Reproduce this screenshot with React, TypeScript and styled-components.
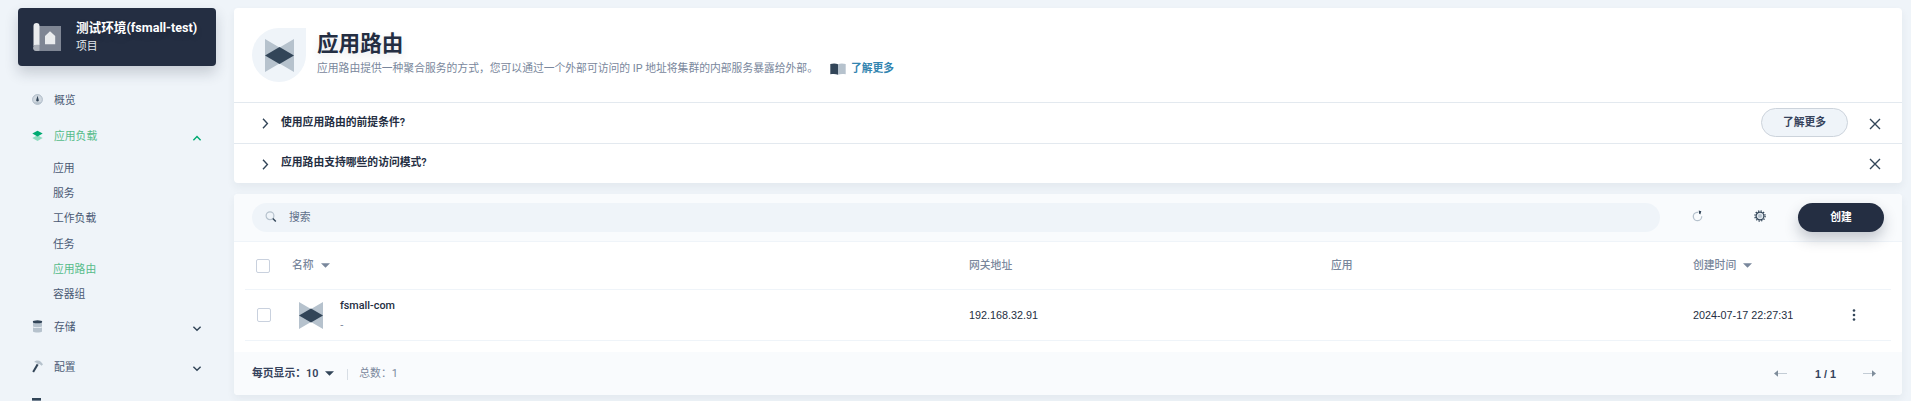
import React from 'react';
import styled, { createGlobalStyle } from 'styled-components';

const ink = '#242e42';
const slate = '#324558';
const pale = '#b6c2cd';
const muted = '#79879c';

const GlobalStyle = createGlobalStyle`
  * { box-sizing: border-box; }
  html, body { margin: 0; height: 401px; overflow: hidden; background: #eff4f9; }
  body {
    font-family: Roboto, "Noto Sans CJK SC", sans-serif;
    font-size: 10.8px;
    line-height: 18px;
    color: ${ink};
    white-space: nowrap;
  }
  svg { display: block; flex: none; }
`;

const Page = styled.div`
  display: flex;
  width: 1911px;
  height: 401px;
  padding: 8px 9px 0 18px;
  overflow: hidden;
`;

const Sidebar = styled.aside`
  width: 198px;
  margin-right: 18px;
  flex: none;
`;

const ProjectCard = styled.div`
  display: flex;
  align-items: center;
  height: 58px;
  padding-left: 15px;
  border-radius: 4px;
  background: ${ink};
  color: #fff;
  box-shadow: 0 7px 14px rgba(36, 46, 66, 0.2);
`;

const ProjectText = styled.div`
  margin-left: 15px;
  strong { display: block; font-size: 12.6px; font-weight: 700; line-height: 18px; text-shadow: 0 4px 8px rgba(36, 46, 66, 0.1); }
  span { display: block; padding-top: 1px; line-height: 18px; color: #e3e9ef; }
`;

const Nav = styled.nav`
  padding: 16px 14px 0;
`;

const NavItem = styled.div<{ $active?: boolean; $height: number }>`
  display: flex;
  align-items: center;
  height: ${p => p.$height}px;
  color: ${p => (p.$active ? '#55bc8a' : '#4a5974')};
`;

const NavLabel = styled.span`
  flex: 1;
  margin-left: 11px;
  padding-top: 1px;
`;

const NavArrow = styled.div`
  padding-top: 4px;
`;

const SubList = styled.div`
  padding: 2px 0 0 21px;
`;

const SubItem = styled.div<{ $active?: boolean }>`
  height: 25.2px;
  line-height: 25.2px;
  color: ${p => (p.$active ? '#55bc8a' : '#4a5974')};
`;

const Main = styled.main`
  width: 1668px;
  flex: none;
`;

const Card = styled.section`
  overflow: hidden;
  border-radius: 4px;
  background: #fff;
  box-shadow: 0 4px 8px rgba(36, 46, 66, 0.06);
`;

const Intro = styled.header`
  display: flex;
  height: 94px;
  padding: 20px 18px 0;
`;

const IconDrop = styled.div`
  display: flex;
  align-items: center;
  justify-content: center;
  width: 54px;
  height: 54px;
  margin-right: 11px;
  border-radius: 50% 0 50% 50%;
  background: #eff4f9;
`;

const Title = styled.h1`
  margin: 0;
  padding-top: 1px;
  font-size: 21.6px;
  line-height: 29px;
  font-weight: 700;
  text-shadow: 0 4px 8px rgba(36, 46, 66, 0.1);
`;

const Description = styled.p`
  display: flex;
  align-items: center;
  margin: 2px 0 0;
  color: ${muted};
`;

const LearnMore = styled.a`
  display: flex;
  align-items: center;
  gap: 5px;
  margin-left: 12px;
  color: #3385b0;
  font-weight: 700;
`;

const Tip = styled.div<{ $height: number }>`
  display: flex;
  align-items: center;
  height: ${p => p.$height}px;
  padding: 1px 21px 0 27px;
  border-top: 1px solid #e3e9ef;
`;

const TipTitle = styled.strong`
  flex: 1;
  margin: 0 0 2px 10px;
  font-weight: 600;
`;

const TipButton = styled.button`
  width: 87px;
  height: 29px;
  margin: 0 21px 2px 0;
  padding: 0;
  border: 1px solid #ccd3db;
  border-radius: 15px;
  background: #eff4f9;
  color: #36435c;
  font: inherit;
  font-weight: 600;
`;

const TableCard = styled(Card)`
  margin-top: 11px;
`;

const Toolbar = styled.div`
  position: relative;
  display: flex;
  align-items: center;
  height: 48px;
  padding: 0 18px 1px;
  border-bottom: 1px solid #eff4f9;
  background: #f9fbfd;
`;

const Search = styled.div`
  display: flex;
  align-items: center;
  width: 1408px;
  height: 29px;
  padding: 1px 13px 0;
  gap: 12px;
  border-radius: 15px;
  background: #eff4f9;
  color: #5f708a;
  svg { margin-bottom: 2px; }
`;

const ToolIcon = styled.div<{ $left: number }>`
  margin: 0 0 3px ${p => p.$left}px;
`;

const CreateButton = styled.button`
  width: 86px;
  height: 29px;
  margin-left: auto;
  padding: 2px 0 0;
  border: 0;
  border-radius: 15px;
  background: ${ink};
  color: #fff;
  font: inherit;
  font-weight: 700;
  box-shadow: 0 7px 14px rgba(36, 46, 66, 0.25);
`;

const Row = styled.div<{ $height: number; $inset: number }>`
  display: grid;
  grid-template-columns: ${p => 47 - p.$inset}px 677px 362px 362px 159px 1fr;
  align-items: center;
  height: ${p => p.$height}px;
  margin: 0 11px;
  padding-left: ${p => p.$inset}px;
  border-bottom: 1px solid #eff4f9;
`;

const HeadCell = styled.div`
  display: flex;
  align-items: center;
  gap: 7px;
  color: ${muted};
  font-weight: 500;
`;

const Checkbox = styled.span`
  width: 14px;
  height: 14px;
  border: 1px solid #c9d1de;
  border-radius: 2px;
  background: #fff;
`;

const NameCell = styled.div`
  display: flex;
  align-items: center;
  padding-left: 7px;
`;

const NameText = styled.div`
  margin-left: 17px;
  strong { display: block; font-weight: 500; }
  span { display: block; color: ${muted}; font-family: "Liberation Sans", sans-serif; }
`;

const Mono = styled.div`
  font-family: "Liberation Sans", sans-serif;
`;

const Footer = styled.footer`
  display: flex;
  align-items: center;
  height: 43px;
  margin-top: 11px;
  padding: 1px 26px 0 18px;
  background: #f9fbfd;
`;

const PageSize = styled.div`
  display: flex;
  align-items: center;
  gap: 7px;
  font-weight: 600;
  color: #36435c;
  svg { margin-bottom: 1px; }
`;

const Total = styled.div`
  display: flex;
  align-items: center;
  flex: 1;
  color: ${muted};
  &::before { content: ''; width: 1px; height: 11px; margin: 0 11px 0 13px; background: #d8dee5; }
`;

const Pager = styled.div`
  display: flex;
  align-items: center;
  font-family: "Liberation Sans", sans-serif;
  font-weight: 700;
  color: #36435c;
  svg { margin-bottom: 2px; }
  span { margin: 0 27px 0 28px; }
`;

const RouterIcon = ({ width, height }: { width: number; height: number }) => (
  <svg width={width} height={height} viewBox="0 0 29 33" preserveAspectRatio="none">
    <path d="M0 0 14.5 8.5 29 0V33L14.5 24.5 0 33Z" fill={pale} />
    <path d="M0 16.5 14.5 8 29 16.5 14.5 25Z" fill={slate} />
  </svg>
);

const Chevron = ({ dir, color = slate }: { dir: 'up' | 'down' | 'right'; color?: string }) => {
  const d = { up: 'M1.4 7.2 5 3.6l3.6 3.6', down: 'M1.4 2.7 5 6.3l3.6-3.6', right: 'M2 .8 6.4 5.5 2 10.2' }[dir];
  return (
    <svg width="10" height="11" viewBox="0 0 10 11" fill="none" stroke={color} strokeWidth="1.4">
      <path d={d} />
    </svg>
  );
};

const Close = () => (
  <svg width="12" height="12" viewBox="0 0 12 12" stroke={slate} strokeWidth="1.4">
    <path d="M1 1l10 10M11 1 1 11" />
  </svg>
);

const Caret = ({ color }: { color: string }) => (
  <svg width="9" height="5" viewBox="0 0 9 5">
    <path d="M0 .3h9L4.5 4.8Z" fill={color} />
  </svg>
);

const ProjectIcon = () => (
  <svg width="28" height="28" viewBox="0 0 28 28">
    <path d="M6 3h22v25H3V22h3Z" fill="#7f8694" />
    <path d="M.5 3a3 3 0 0 1 6 0v19H3a3 3 0 0 0-2.5 1.500Z" fill="#eaecee" />
    <path d="M.5 23.500a2.600 2.600 0 0 1 2.600-1.800h3.400v5.300a1 1 0 0 1-1 1H3a3 3 0 0 1-2.500-4.500Z" fill="#abb0b9" />
    <path d="M17 8.300 22.200 13v8.300H12V13Z" fill="#eaecee" />
  </svg>
);

const OverviewIcon = () => (
  <svg width="11" height="12" viewBox="0 0 11 12">
    <circle cx="5.500" cy="5.500" r="4.900" fill="#d0d8e0" stroke="#a9b6c3" strokeWidth=".9" />
    <path d="M1.600 8.300h7.800A4.900 4.900 0 0 1 1.600 8.300Z" fill={pale} />
    <path d="M5.500 1.800 6.700 5.800a1.300 1.300 0 1 1-2.400 0Z" fill={slate} />
  </svg>
);

const LayersIcon = () => (
  <svg width="11" height="12" viewBox="0 0 11 12">
    <path d="M.3 8 5.500 5.300 10.700 8 5.500 10.900Z" fill="#8fdcc0" />
    <path d="M.3 3.600 5.500.7l5.200 2.900-5.200 2.900Z" fill="#00aa72" />
  </svg>
);

const StorageIcon = () => (
  <svg width="11" height="15" viewBox="0 0 11 15">
    <path d="M1 2h9v4.500c-1 1-8 1-9 0Z" fill={pale} />
    <path d="M1 7.500c2 .8 7 .8 9 0v4c-1 1.300-8 1.300-9 0Z" fill={pale} />
    <ellipse cx="5.500" cy="1.800" rx="4.700" ry="1.500" fill={slate} />
  </svg>
);

const HammerIcon = () => (
  <svg width="11" height="15" viewBox="0 0 11 15">
    <path d="M2.200 2C4 .2 7 0 8.800 1.800L11 4.200 9.600 5.800 7.600 4 6.200 4.500 4.500 2.800Z" fill={pale} />
    <path d="M4.800 3.800 6.500 5 2 12.500.300 11.500Z" fill={slate} />
  </svg>
);

const ServerIcon = () => (
  <svg width="11" height="15" viewBox="0 0 11 15">
    <path d="M0 0h9v12H0Z" fill={pale} />
    <path d="M0 0h9v2.500H0Z" fill={slate} />
  </svg>
);

const BookIcon = () => (
  <svg width="16" height="12" viewBox="0 0 16 12">
    <path d="M.3 1C3 .2 6 .2 8 1.300V11.800C6 10.700 3 10.700.3 11.300Z" fill={slate} />
    <path d="M15.700 1C13 .2 10 .2 8 1.300V11.800c2-1.100 5-1.100 7.700-.5Z" fill={pale} />
  </svg>
);

const SearchIcon = () => (
  <svg width="12" height="12" viewBox="0 0 12 12" fill="none">
    <circle cx="5" cy="4.700" r="3.900" stroke={pale} strokeWidth="1.200" />
    <path d="m7.800 7.600 3 3" stroke={slate} strokeWidth="1.400" />
  </svg>
);

const RefreshIcon = () => (
  <svg width="11" height="12" viewBox="0 0 11 12" fill="none">
    <path d="M6 2.300H4.800a4.200 4.200 0 1 0 4.900 3.900" stroke={pale} strokeWidth="1.300" />
    <path d="M6.800.6 9.300 1.200 8.300 4.400 7 3.600Z" fill={slate} />
  </svg>
);

const GearIcon = () => (
  <svg width="12" height="12" viewBox="0 0 12 12" fill="none">
    <circle cx="6" cy="6" r="5.100" stroke={slate} strokeWidth="1.300" strokeDasharray="1.300 1.370" />
    <circle cx="6" cy="6" r="3.900" fill="#e3e9ef" stroke={slate} strokeWidth="1.200" />
    <circle cx="6" cy="6" r="2" fill={pale} />
  </svg>
);

const PagerArrow = ({ flip }: { flip?: boolean }) => (
  <svg width="13" height="7" viewBox="0 0 13 7">
    <g transform={flip ? 'translate(13 0) scale(-1 1)' : undefined}>
      <path d="M4 3h9v1H4Z" fill="#c3ccd5" />
      <path d="M0 3.500 4 .2v6.600Z" fill="#7f8d9b" />
    </g>
  </svg>
);

const MoreIcon = () => (
  <svg width="4" height="12" viewBox="0 0 4 12" fill={slate}>
    <circle cx="2" cy="1.500" r="1.300" />
    <circle cx="2" cy="6" r="1.300" />
    <circle cx="2" cy="10.500" r="1.300" />
  </svg>
);

const workloads = ['应用', '服务', '工作负载', '任务', '应用路由', '容器组'];

export default function App() {
  return (
    <Page>
      <GlobalStyle />
      <Sidebar>
        <ProjectCard>
          <ProjectIcon />
          <ProjectText>
            <strong>测试环境(fsmall-test)</strong>
            <span>项目</span>
          </ProjectText>
        </ProjectCard>
        <Nav>
          <NavItem $height={36}><OverviewIcon /><NavLabel>概览</NavLabel></NavItem>
          <NavItem $height={36} $active>
            <LayersIcon /><NavLabel>应用负载</NavLabel>
            <NavArrow><Chevron dir="up" color="#00aa72" /></NavArrow>
          </NavItem>
          <SubList>
            {workloads.map(name => <SubItem key={name} $active={name === '应用路由'}>{name}</SubItem>)}
          </SubList>
          <NavItem $height={40}>
            <StorageIcon /><NavLabel>存储</NavLabel><NavArrow><Chevron dir="down" /></NavArrow>
          </NavItem>
          <NavItem $height={40}>
            <HammerIcon /><NavLabel>配置</NavLabel><NavArrow><Chevron dir="down" /></NavArrow>
          </NavItem>
          <NavItem $height={36}><ServerIcon /></NavItem>
        </Nav>
      </Sidebar>
      <Main>
        <Card>
          <Intro>
            <IconDrop><RouterIcon width={29} height={33} /></IconDrop>
            <div>
              <Title>应用路由</Title>
              <Description>
                应用路由提供一种聚合服务的方式，您可以通过一个外部可访问的 IP 地址将集群的内部服务暴露给外部。
                <LearnMore><BookIcon />了解更多</LearnMore>
              </Description>
            </div>
          </Intro>
          <Tip $height={41}>
            <Chevron dir="right" />
            <TipTitle>使用应用路由的前提条件?</TipTitle>
            <TipButton>了解更多</TipButton>
            <Close />
          </Tip>
          <Tip $height={40}>
            <Chevron dir="right" />
            <TipTitle>应用路由支持哪些的访问模式?</TipTitle>
            <Close />
          </Tip>
        </Card>
        <TableCard>
          <Toolbar>
            <Search><SearchIcon />搜索</Search>
            <ToolIcon $left={32}><RefreshIcon /></ToolIcon>
            <ToolIcon $left={51}><GearIcon /></ToolIcon>
            <CreateButton>创建</CreateButton>
          </Toolbar>
          <Row $height={48} $inset={11}>
            <Checkbox />
            <HeadCell>名称<Caret color={muted} /></HeadCell>
            <HeadCell>网关地址</HeadCell>
            <HeadCell>应用</HeadCell>
            <HeadCell>创建时间<Caret color={muted} /></HeadCell>
          </Row>
          <Row $height={51} $inset={12}>
            <Checkbox />
            <NameCell>
              <RouterIcon width={24} height={27} />
              <NameText><strong>fsmall-com</strong><span>-</span></NameText>
            </NameCell>
            <Mono>192.168.32.91</Mono>
            <div />
            <Mono>2024-07-17 22:27:31</Mono>
            <MoreIcon />
          </Row>
          <Footer>
            <PageSize>每页显示：10<Caret color={slate} /></PageSize>
            <Total>总数：1</Total>
            <Pager><PagerArrow /><span>1 / 1</span><PagerArrow flip /></Pager>
          </Footer>
        </TableCard>
      </Main>
    </Page>
  );
}
